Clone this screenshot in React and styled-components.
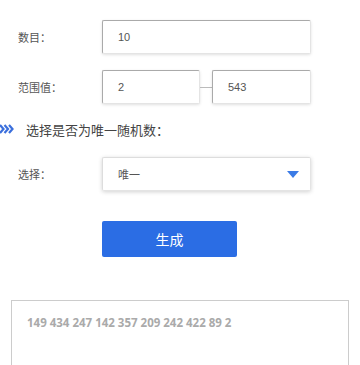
import React from 'react';
import styled, { createGlobalStyle } from 'styled-components';

const GlobalStyle = createGlobalStyle`
  body {
    margin: 0;
    background: #fff;
    font-family: "Microsoft YaHei", "Noto Sans CJK SC", "Liberation Sans", sans-serif;
  }
`;

const Page = styled.div`
  width: 360px;
  height: 365px;
  overflow: hidden;
  padding-top: 20px;
  box-sizing: border-box;
`;

const Row = styled.div`
  display: flex;
  align-items: center;
  height: 34px;
  margin-bottom: ${p => p.gap || 16}px;
`;

const Label = styled.div`
  width: 102px;
  padding-left: 18px;
  box-sizing: border-box;
  font-size: 11px;
  color: #555;
`;

const Field = styled.div`
  width: ${p => p.w}px;
  height: 34px;
  box-sizing: border-box;
  border: 1px solid #e4e4e4;
  border-top-color: #aaa;
  border-left-color: #aaa;
  border-radius: 2px;
  box-shadow: 0 1px 3px rgba(0, 0, 0, 0.12);
  padding-left: 15px;
  display: flex;
  align-items: center;
  font-size: 11px;
  color: #555;
  font-family: "Liberation Sans", "Noto Sans CJK SC", sans-serif;
`;

const Dash = styled.div`
  width: 12px;
  height: 1px;
  background: #bbb;
`;

const Heading = styled.div`
  display: flex;
  align-items: center;
  height: 20px;
  margin: -1px 0 18px 0;
  font-size: 13px;
  color: #444;
  gap: 12px;
`;

const Select = styled(Field)`
  justify-content: space-between;
  padding-right: 11px;
  box-shadow: 0 1px 4px rgba(0, 0, 0, 0.18);
  border-top-color: #ddd;
  border-left-color: #ddd;
`;

const Caret = styled.div`
  width: 0;
  height: 0;
  border-left: 6px solid transparent;
  border-right: 6px solid transparent;
  border-top: 7px solid #3b7be6;
`;

const ButtonRow = styled.div`
  padding-left: 102px;
  margin-bottom: 43px;
`;

const Button = styled.button`
  width: 135px;
  height: 36px;
  border: none;
  border-radius: 2px;
  background: #2b6de4;
  color: #fff;
  font-size: 14px;
  font-family: inherit;
`;

const Result = styled.div`
  margin: 0 11px;
  height: 80px;
  border: 1px solid #ccc;
  border-bottom: none;
  padding: 14px 15px;
  box-sizing: border-box;
  font-family: "Open Sans", "Liberation Sans", sans-serif;
  font-weight: 700;
  font-size: 11.5px;
  color: #aaa;
`;

export default function App() {
  return (
    <Page>
      <GlobalStyle />
      <Row>
        <Label>数目：</Label>
        <Field w={209}>10</Field>
      </Row>
      <Row>
        <Label>范围值：</Label>
        <Field w={98}>2</Field>
        <Dash />
        <Field w={99}>543</Field>
      </Row>
      <Heading>
        <svg width="14" height="10" viewBox="0 0 14 10">
          <g fill="none" stroke="#3b6fdc" strokeWidth="2.2">
            <path d="M0 1 L3.5 5 L0 9" />
            <path d="M4.5 1 L8 5 L4.5 9" />
            <path d="M9 1 L12.5 5 L9 9" />
          </g>
        </svg>
        选择是否为唯一随机数：
      </Heading>
      <Row gap={30}>
        <Label>选择：</Label>
        <Select w={209}>
          唯一
          <Caret />
        </Select>
      </Row>
      <ButtonRow>
        <Button>生成</Button>
      </ButtonRow>
      <Result>149 434 247 142 357 209 242 422 89 2</Result>
    </Page>
  );
}
